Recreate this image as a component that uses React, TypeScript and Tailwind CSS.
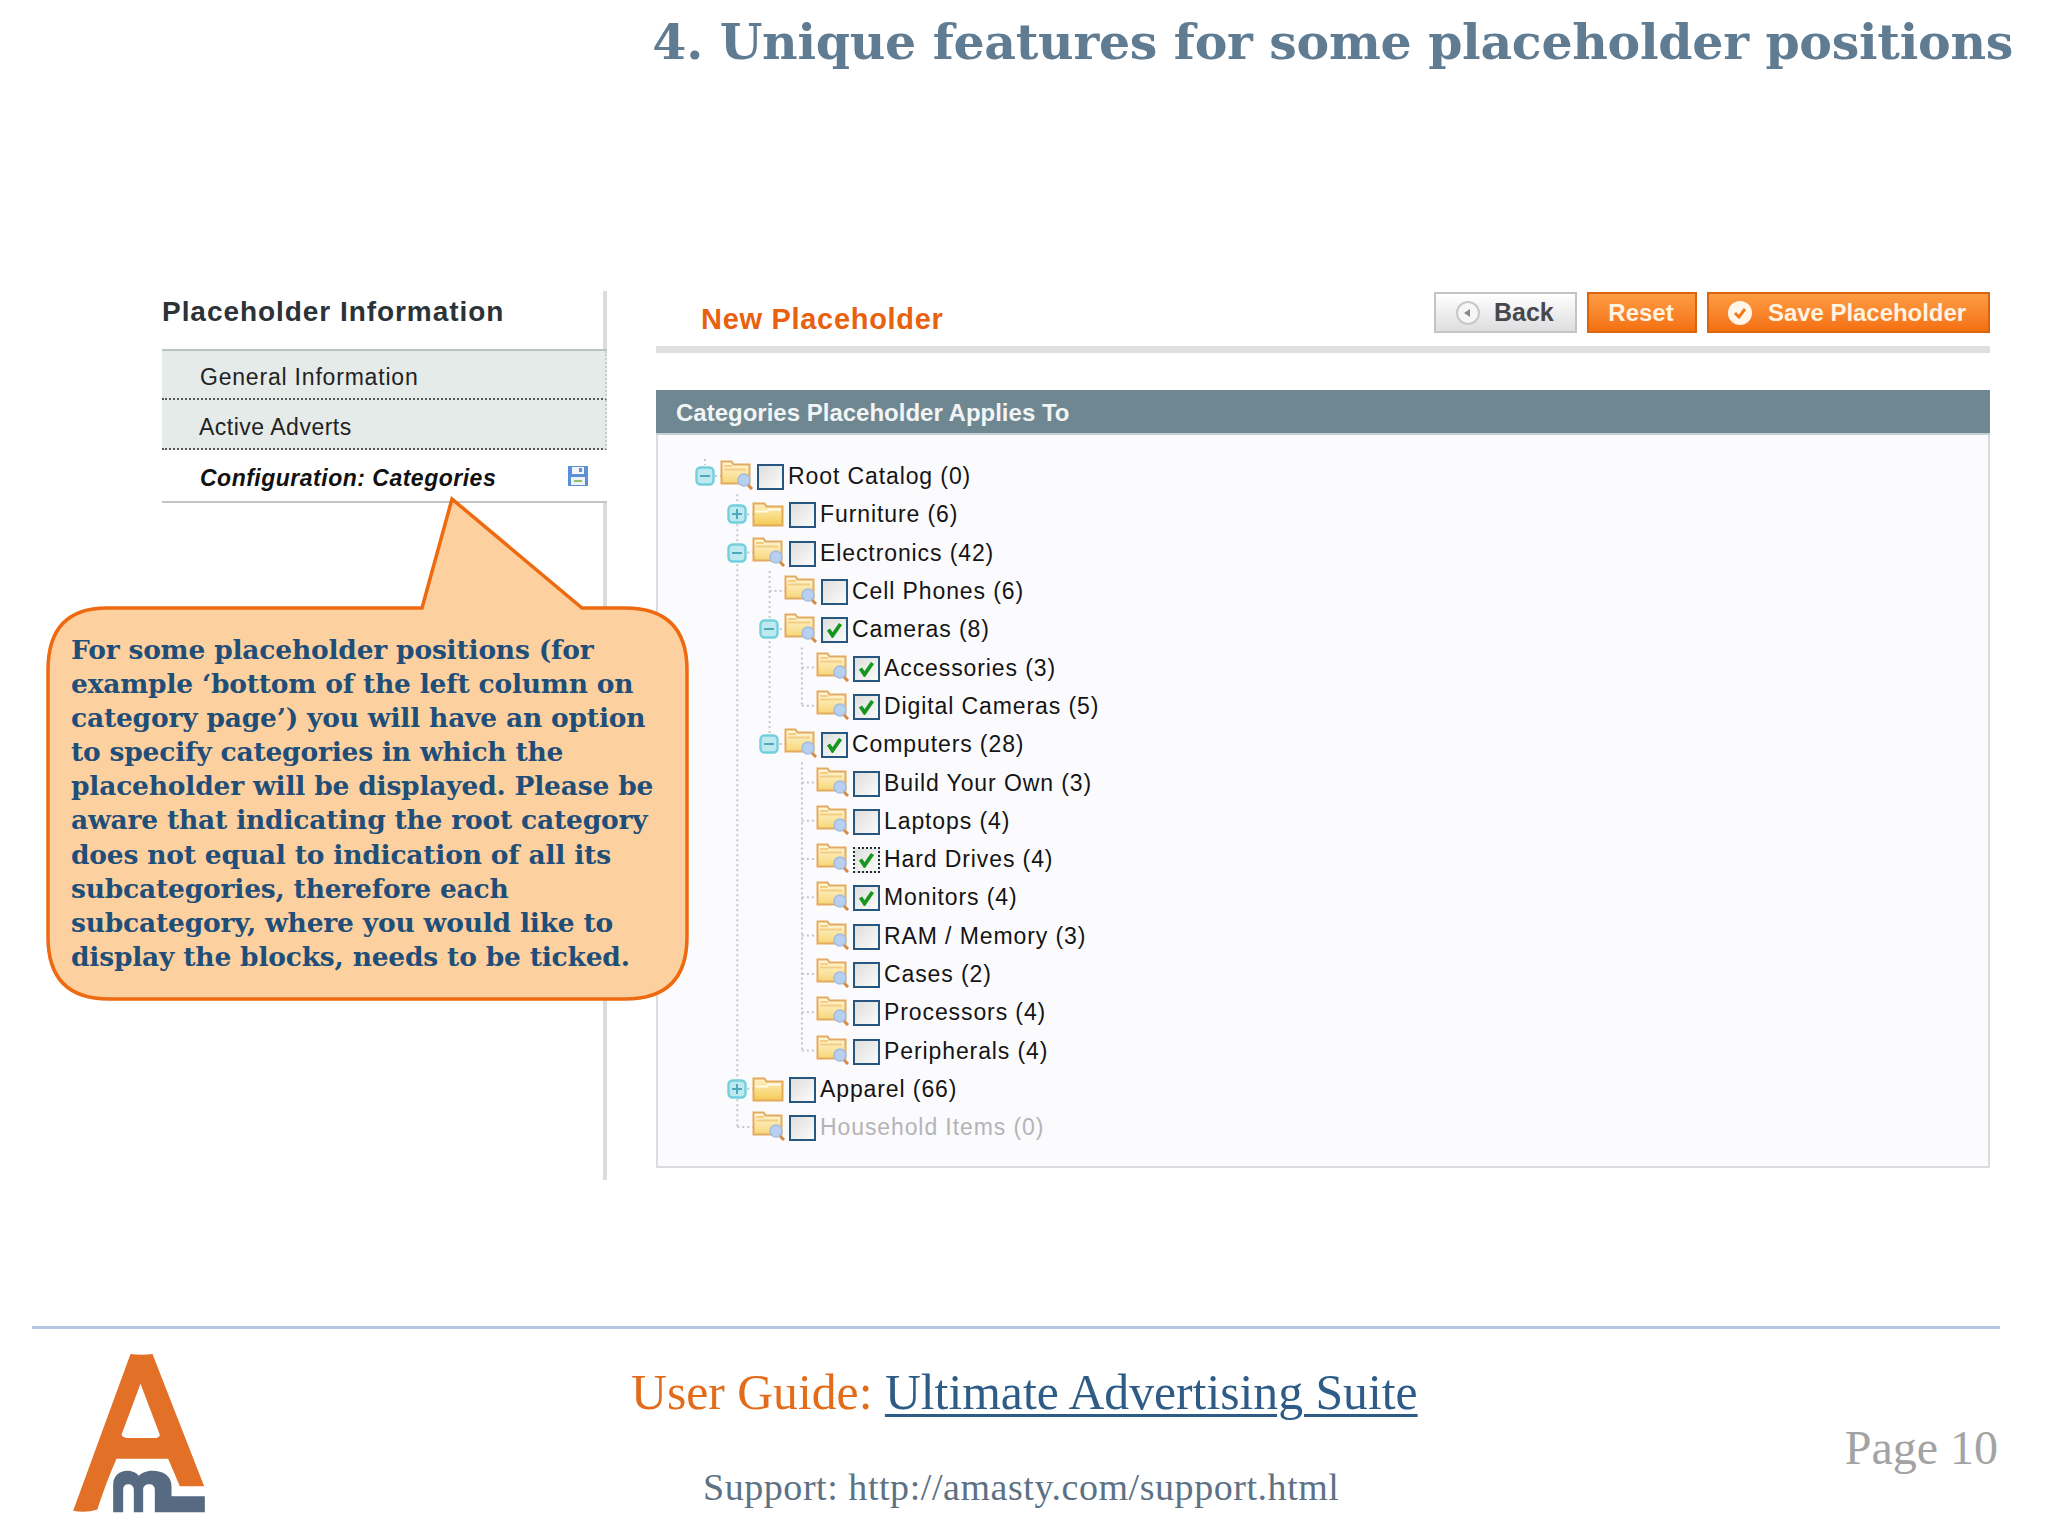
import React from 'react';

const ROW_H = 38.3;

type Row = {
  label: string;
  level: number;
  toggle?: 'plus' | 'minus';
  open?: boolean;
  checked?: boolean;
  focus?: boolean;
  muted?: boolean;
};

const rows: Row[] = [
  { label: 'Root Catalog (0)', level: 0, toggle: 'minus', open: true },
  { label: 'Furniture (6)', level: 1, toggle: 'plus' },
  { label: 'Electronics (42)', level: 1, toggle: 'minus', open: true },
  { label: 'Cell Phones (6)', level: 2, open: true },
  { label: 'Cameras (8)', level: 2, toggle: 'minus', open: true, checked: true },
  { label: 'Accessories (3)', level: 3, open: true, checked: true },
  { label: 'Digital Cameras (5)', level: 3, open: true, checked: true },
  { label: 'Computers (28)', level: 2, toggle: 'minus', open: true, checked: true },
  { label: 'Build Your Own (3)', level: 3, open: true },
  { label: 'Laptops (4)', level: 3, open: true },
  { label: 'Hard Drives (4)', level: 3, open: true, checked: true, focus: true },
  { label: 'Monitors (4)', level: 3, open: true, checked: true },
  { label: 'RAM / Memory (3)', level: 3, open: true },
  { label: 'Cases (2)', level: 3, open: true },
  { label: 'Processors (4)', level: 3, open: true },
  { label: 'Peripherals (4)', level: 3, open: true },
  { label: 'Apparel (66)', level: 1, toggle: 'plus' },
  { label: 'Household Items (0)', level: 1, open: true, muted: true },
];

const calloutLines = [
  'For some placeholder positions (for',
  'example ‘bottom of the left column on',
  'category page’) you will have an option',
  'to specify categories in which the',
  'placeholder will be displayed. Please be',
  'aware that indicating the root category',
  'does not equal to indication of all its',
  'subcategories, therefore each',
  'subcategory, where you would like to',
  'display the blocks, needs to be ticked.',
];

function Toggle({ kind }: { kind: 'plus' | 'minus' }) {
  return (
    <svg width="20" height="20" viewBox="0 0 20 20">
      <rect x="1.5" y="1.5" width="17" height="17" rx="4" fill="#bfe9f0" stroke="#72cfdc" strokeWidth="2.4" />
      <path d="M5 10h10" stroke="#4fa9bb" strokeWidth="2" />
      {kind === 'plus' && <path d="M10 5v10" stroke="#4fa9bb" strokeWidth="2" />}
    </svg>
  );
}

function Folder({ open }: { open?: boolean }) {
  if (!open) {
    return (
      <svg width="32" height="26" viewBox="0 0 32 26">
        <defs>
          <linearGradient id="foldClosed" x1="0" y1="0" x2="0" y2="1">
            <stop offset="0" stopColor="#fdf1c4" />
            <stop offset="1" stopColor="#f5cb55" />
          </linearGradient>
        </defs>
        <path d="M1.5 2.5h11l2 3h16v19h-29z" fill="url(#foldClosed)" stroke="#e4a95c" strokeWidth="2" />
        <path d="M3 10.5h12l2-2h12" fill="none" stroke="#fffbe8" strokeWidth="2" />
      </svg>
    );
  }
  return (
    <svg width="36" height="30" viewBox="0 0 36 30">
      <defs>
        <linearGradient id="foldOpen" x1="0" y1="0" x2="0" y2="1">
          <stop offset="0" stopColor="#fff8dc" />
          <stop offset="1" stopColor="#f8d676" />
        </linearGradient>
      </defs>
      <path d="M1.5 1.5h10l2 3h16v19h-28z" fill="url(#foldOpen)" stroke="#e3aa60" strokeWidth="2" />
      <path d="M4 6h8M4 9.5h22" stroke="#f3cd86" strokeWidth="2" />
      <circle cx="24" cy="20" r="6" fill="#b7d0ef" stroke="#a3bde0" strokeWidth="1.6" />
      <path d="M28 25l4 4" stroke="#d08a4a" strokeWidth="3" />
    </svg>
  );
}

function Check({ checked, focus }: { checked?: boolean; focus?: boolean }) {
  return (
    <div
      className={`flex h-[26px] w-[27px] shrink-0 items-center justify-center border-2 bg-gradient-to-br from-[#dededc] to-[#fbfbfb] ${focus ? 'border-dotted border-[#1d2f3d]' : 'border-solid border-[#27567f]'}`}
    >
      {checked && (
        <svg width="17" height="16" viewBox="0 0 17 16">
          <path d="M2.5 7.5l4 6L14.5 2" fill="none" stroke="#16961e" strokeWidth="3.8" />
        </svg>
      )}
    </div>
  );
}

function TreeLines() {
  const y = (i: number) => 19 + ROW_H * i;
  const x = (level: number) => 15 + 32.3 * level;
  const dotted = { stroke: '#c3c6ca', strokeWidth: 2, strokeDasharray: '2 3' };
  return (
    <svg className="pointer-events-none absolute left-0 top-0" width="300" height="700">
      <line x1={x(0)} y1={2} x2={x(0)} y2={8} {...dotted} />
      <line x1={x(1)} y1={y(1) - 20} x2={x(1)} y2={y(17)} {...dotted} />
      <line x1={x(2)} y1={y(3) - 20} x2={x(2)} y2={y(7)} {...dotted} />
      <line x1={x(3)} y1={y(5) - 20} x2={x(3)} y2={y(6)} {...dotted} />
      <line x1={x(3)} y1={y(8) - 20} x2={x(3)} y2={y(15)} {...dotted} />
      {rows.map((r, i) => (
        <line key={i} x1={x(r.level)} y1={y(i)} x2={x(r.level) + 16} y2={y(i)} {...dotted} />
      ))}
    </svg>
  );
}

function TreeRow({ row }: { row: Row }) {
  return (
    <div className="relative flex h-[38.3px] items-center">
      <div className={row.level === 1 ? 'w-[32px] shrink-0' : row.level === 2 ? 'w-[64px] shrink-0' : row.level === 3 ? 'w-[96px] shrink-0' : 'w-0'} />
      <div className="flex w-[30px] shrink-0 justify-center">{row.toggle && <Toggle kind={row.toggle} />}</div>
      <div className={row.open ? '-mb-[2px] -mt-[4px] h-[30px] w-[32px] shrink-0' : 'h-[26px] w-[32px] shrink-0'}>
        <Folder open={row.open} />
      </div>
      <div className="ml-[5px] mt-[2px]">
        <Check checked={row.checked} focus={row.focus} />
      </div>
      <span
        className={`ml-[4px] mt-px whitespace-nowrap text-[23px] leading-none tracking-[0.9px] ${row.muted ? 'text-[#b4b4b6]' : 'text-[#141414]'}`}
      >
        {row.label}
      </span>
    </div>
  );
}

function Sidebar() {
  return (
    <aside className="relative h-[889px] w-[445px] shrink-0 border-r-4 border-[#dcdcdc] font-['Liberation_Sans',sans-serif]">
      <h2 className="flex h-[58px] items-end pb-[23px] text-[28px] font-bold leading-none tracking-[0.95px] text-[#2b3337]">
        Placeholder Information
      </h2>
      <div className="-mr-1 border-t-2 border-[#bcc3c5]">
        <div className="flex h-[49px] items-center border-b-2 border-r-2 border-dotted border-b-[#555] border-r-[#c6cbcb] bg-[#e5ebe9] pl-[38px] pt-[5px] text-[23px] tracking-[0.8px] text-[#222]">
          General Information
        </div>
        <div className="flex h-[50px] items-center border-b-2 border-r-2 border-dotted border-b-[#555] border-r-[#c6cbcb] bg-[#e5ebe9] pl-[37px] pt-[6px] text-[23px] tracking-[0.5px] text-[#222]">
          Active Adverts
        </div>
        <div className="flex h-[53px] items-center justify-between border-b-2 border-[#c4c4c4] bg-white pl-[38px] pr-[19px] text-[23px] font-bold italic text-[#111]">
          <span className="pt-[5px] tracking-[0.5px]">Configuration: Categories</span>
          <svg width="20" height="20" viewBox="0 0 20 20">
            <rect width="20" height="20" fill="#5b8fd6" />
            <rect x="4" y="1" width="12" height="7" fill="#f1f5fb" />
            <rect x="11" y="2" width="3" height="4" fill="#5b8fd6" />
            <rect x="3" y="11" width="14" height="8" fill="#eef2f6" />
            <rect x="6" y="14" width="8" height="2" fill="#8fbf70" />
          </svg>
        </div>
      </div>
    </aside>
  );
}

function Content() {
  return (
    <section className="ml-[49px] w-[1334px] shrink-0 font-['Liberation_Sans',sans-serif]">
      <div className="flex h-[55px] justify-between">
        <h1 className="pl-[45px] pt-[11px] text-[29px] font-bold leading-[34px] tracking-[0.7px] text-[#e8610f]">
          New Placeholder
        </h1>
        <div className="flex h-[42px] gap-[10px] pt-px">
          <button className="flex h-[41px] w-[143px] items-center gap-[14px] border-2 border-[#c4c4c6] bg-gradient-to-b from-white to-[#dedee0] pl-[20px] text-[25px] font-bold text-[#47484c]">
            <svg width="24" height="24" viewBox="0 0 24 24">
              <circle cx="12" cy="12" r="11" fill="#f6f6f6" stroke="#c8c8c8" strokeWidth="2" />
              <path d="M14 8v8l-6-4z" fill="#8a8a8a" />
            </svg>
            Back
          </button>
          <button className="flex h-[41px] w-[110px] items-center justify-center border-2 border-[#d9660f] bg-gradient-to-b from-[#fd9c42] to-[#f4700e] pr-[2px] text-[24px] font-bold text-[#fff3e2]">
            Reset
          </button>
          <button className="flex h-[41px] w-[283px] items-center gap-[16px] border-2 border-[#d9660f] bg-gradient-to-b from-[#fd9c42] to-[#f4700e] pl-[19px] text-[24px] font-bold tracking-[-0.05px] text-[#fff3e2]">
            <svg width="24" height="24" viewBox="0 0 24 24">
              <circle cx="12" cy="12" r="12" fill="#fff6ea" />
              <path d="M7 12l4 4 6-8" fill="none" stroke="#f07a1a" strokeWidth="3" />
            </svg>
            Save Placeholder
          </button>
        </div>
      </div>
      <div className="h-[7px] bg-[#dfdfe0]" />
      <div className="mt-[37px] flex h-[45px] items-center border-b-2 border-[#c8d0d4] bg-[#6f8791] pl-[20px] pt-[2px] text-[24px] font-bold leading-none text-[#f2f5f6]">
        Categories Placeholder Applies To
      </div>
      <div className="h-[733px] border-2 border-t-0 border-[#dcdcde] bg-[#fbfbfd] pl-[32px] pt-[22px]">
        <div className="relative">
          <TreeLines />
          {rows.map((row) => (
            <TreeRow key={row.label} row={row} />
          ))}
        </div>
      </div>
    </section>
  );
}

function Callout() {
  return (
    <div className="absolute left-[45px] top-[496px] h-[506px] w-[646px]">
      <svg className="absolute inset-0" width="646" height="506" viewBox="0 0 646 506">
        <path
          d="M62 112H377L407 3L537 112H580Q642 112 642 174V441Q642 503 580 503H64Q3 503 3 441V174Q3 112 62 112Z"
          fill="#fdd09f"
          stroke="#ee6a10"
          strokeWidth="3.5"
        />
      </svg>
      <div className="absolute left-[26px] top-[137px] font-['DejaVu_Serif',serif] text-[26.5px] font-bold leading-[34.1px] tracking-[-0.2px] text-[#1f4e79]">
        {calloutLines.map((line) => (
          <div key={line} className="whitespace-nowrap">
            {line}
          </div>
        ))}
      </div>
    </div>
  );
}

function Logo() {
  return (
    <svg width="132" height="160" viewBox="160 130 395 480">
      <path
        fillRule="evenodd"
        d="M332 133Q365 138 398 133L553 530L480 530L445 447L290 447Q262 510 232 600Q195 610 160 603ZM362 222L305 375Q308 385 330 385H400Q420 385 420 375Z"
        fill="#e27027"
      />
      <path
        d="M280 608V525C280 497 300 483 322 483C340 483 350 490 357 498C366 490 378 483 397 483C430 483 455 497 455 530V560H555V608H405V540C405 530 398 524 388 524C377 524 370 530 370 540V608H342V540C342 530 335 524 325 524C315 524 310 530 310 540V608Z"
        fill="#566a82"
      />
    </svg>
  );
}

function Footer() {
  return (
    <footer className="mt-[146px]">
      <div className="ml-[32px] h-[3px] w-[1968px] bg-[#b7c6e2]" />
      <div className="flex pl-[73px] pt-[24px]">
        <Logo />
        <div className="ml-[426px] font-['Liberation_Serif',serif]">
          <div className="mt-[13px] whitespace-nowrap text-[49.7px] leading-[54px] text-[#e36c1a]">
            User Guide:{' '}
            <span className="text-[#2e5c87] underline decoration-[3px] underline-offset-[5px]">Ultimate Advertising Suite</span>
          </div>
          <div className="ml-[72px] mt-[46px] whitespace-nowrap text-[38px] leading-[42px] tracking-[0.55px] text-[#5d7184]">
            Support: http://amasty.com/support.html
          </div>
        </div>
        <div className="ml-auto mr-[50px] mt-[70px] whitespace-nowrap font-['Liberation_Serif',serif] text-[48px] leading-[50px] text-[#a3a3a3]">
          Page 10
        </div>
      </div>
    </footer>
  );
}

export default function App() {
  return (
    <div className="relative h-[1536px] w-[2048px] overflow-hidden bg-white">
      <header className="flex h-[291px] justify-end pr-[35px]">
        <h1 className="mt-[12px] h-fit whitespace-nowrap font-['DejaVu_Serif',serif] text-[49px] font-bold leading-[60px] tracking-[-0.3px] text-[#607c93]">
          4. Unique features for some placeholder positions
        </h1>
      </header>
      <main className="flex pl-[162px]">
        <Sidebar />
        <Content />
      </main>
      <Callout />
      <Footer />
    </div>
  );
}
